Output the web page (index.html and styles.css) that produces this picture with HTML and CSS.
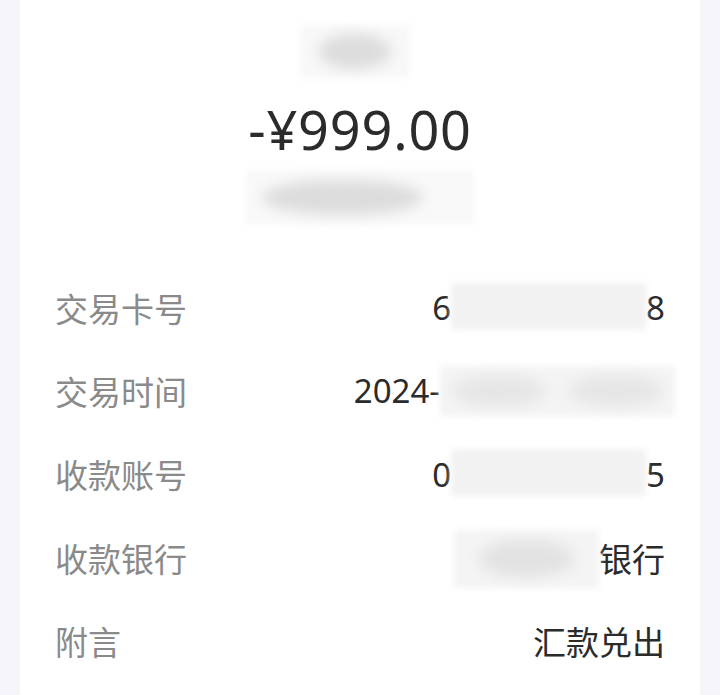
FILE: index.html
```html
<!DOCTYPE html>
<html lang="zh-CN">
<head>
<meta charset="utf-8">
<title>交易详情</title>
<link rel="stylesheet" href="styles.css">
</head>
<body>
<div class="card">
  <div class="head">
    <div class="blur blur-name"><span class="blob"></span></div>
    <div class="amount">-¥999.00</div>
    <div class="blur blur-status"><span class="blob wide"></span></div>
  </div>
  <div class="rows">
    <div class="row">
      <span class="label">交易卡号</span>
      <span class="value"><span>6</span><span class="blur mask-card"></span><span>8</span></span>
    </div>
    <div class="row">
      <span class="label">交易时间</span>
      <span class="value overhang"><span>2024-</span><span class="blur mask-time"><span class="blob left"></span><span class="blob right"></span></span></span>
    </div>
    <div class="row">
      <span class="label">收款账号</span>
      <span class="value"><span>0</span><span class="blur mask-card"></span><span>5</span></span>
    </div>
    <div class="row">
      <span class="label">收款银行</span>
      <span class="value"><span class="blur mask-bank"><span class="blob"></span></span><span>银行</span></span>
    </div>
    <div class="row">
      <span class="label">附言</span>
      <span class="value"><span>汇款兑出</span></span>
    </div>
  </div>
</div>
</body>
</html>
```

FILE: styles.css
```css
html, body {
  margin: 0;
  padding: 0;
}
body {
  background: #f6f6fa;
  font-family: "Noto Sans", "Noto Sans CJK SC", sans-serif;
  height: 695px;
  overflow: hidden;
}
.card {
  margin: 0 20px;
  background: #ffffff;
  height: 695px;
}
.head {
  display: flex;
  flex-direction: column;
  align-items: center;
  padding-top: 25px;
}
.blur {
  display: flex;
  align-items: center;
  justify-content: center;
  background: #f3f3f3;
  filter: blur(3px);
  flex: none;
}
.blob {
  display: block;
  width: 65%;
  height: 65%;
  border-radius: 50%;
  background: #dcdcdc;
  filter: blur(6px);
}
.blob.wide {
  width: 70%;
  margin-right: 15%;
}
.blur-name {
  width: 110px;
  height: 53px;
  margin-right: 10px;
  background: #f8f8f8;
}
.amount {
  margin-top: 19px;
  font-size: 54px;
  line-height: 64px;
  color: #2b2b2b;
  letter-spacing: 0.8px;
}
.blur-status {
  margin-top: 9px;
  width: 230px;
  height: 55px;
  background: #f9f9f9;
}
.rows {
  margin-top: 41px;
  padding: 0 35px;
}
.row {
  height: 83.3px;
  display: flex;
  align-items: center;
  justify-content: space-between;
  font-size: 33px;
}
.label {
  color: #8a8a8a;
}
.value {
  display: flex;
  align-items: center;
  color: #2b2b2b;
}
.value.overhang {
  margin-right: -10px;
}
.mask-card {
  width: 195px;
  height: 47px;
  margin-top: -3px;
  background: #f2f2f2;
}
.mask-time {
  width: 235px;
  height: 50px;
  justify-content: space-around;
  background: #f4f4f4;
}
.mask-time .blob {
  width: 40%;
  background: #e6e6e6;
}
.mask-bank {
  width: 145px;
  height: 58px;
  margin-bottom: -2px;
  background: #f4f4f4;
}
.mask-bank .blob {
  background: #e2e2e2;
}
```
